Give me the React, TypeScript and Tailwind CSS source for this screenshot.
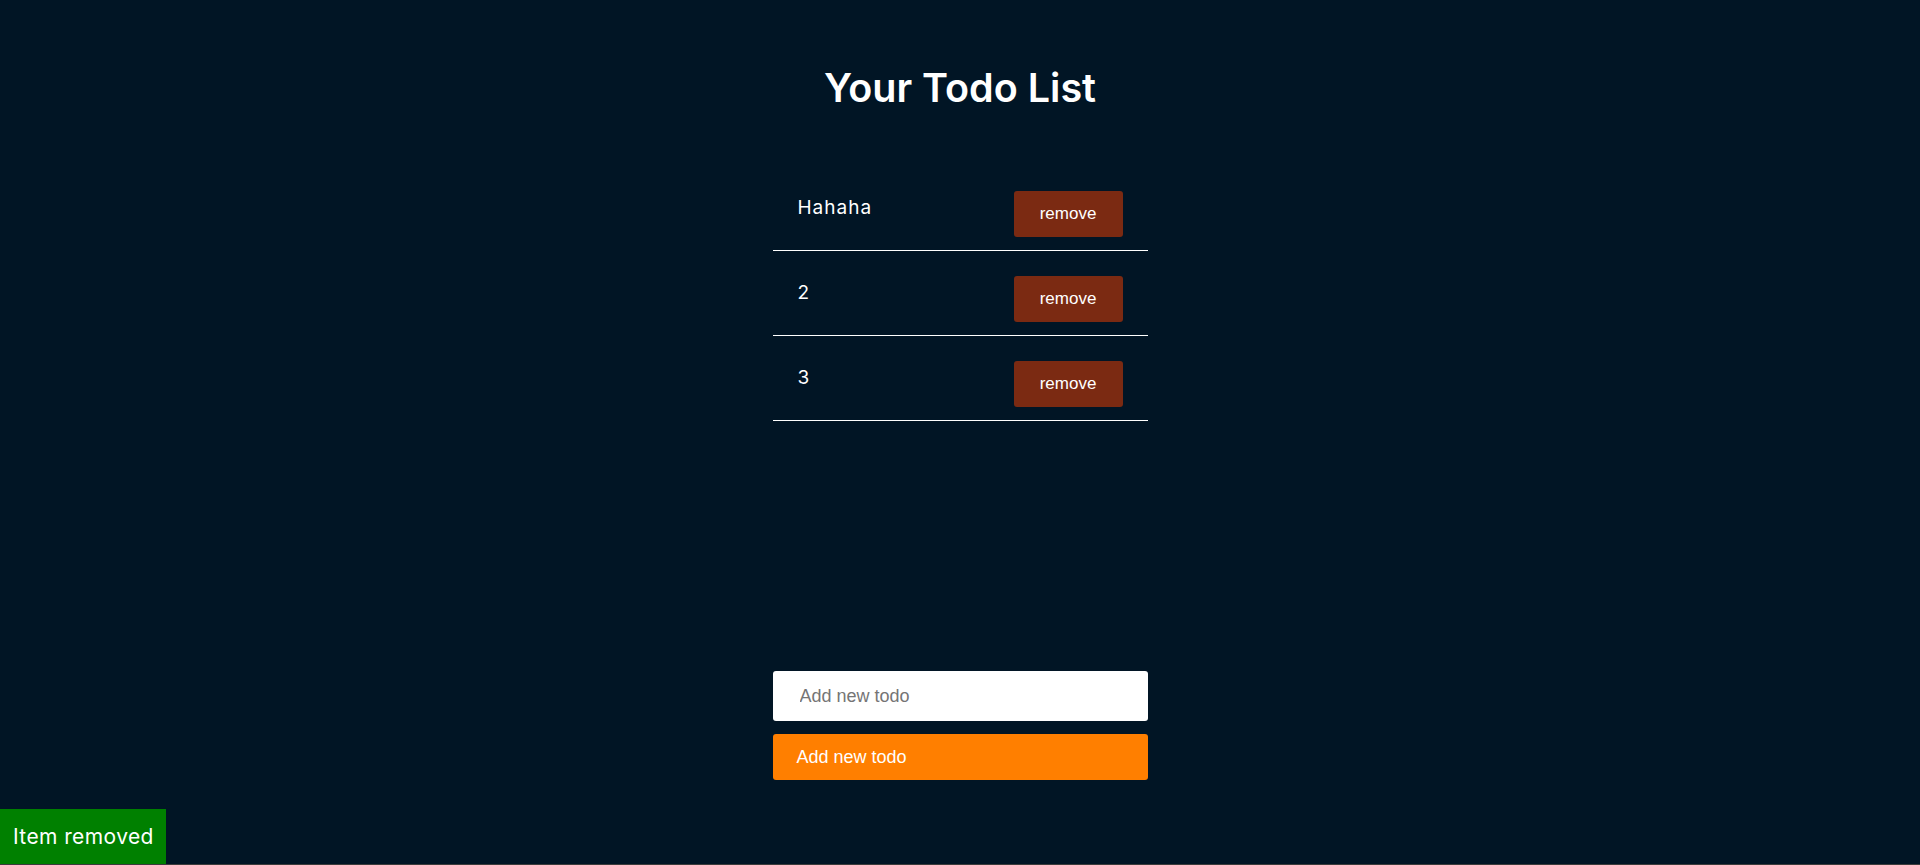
const todos = ['Hahaha', '2', '3'];

const TodoRow: React.FC<{ text: string }> = ({ text }) => {
    return (
        <li className="flex justify-between items-start h-[85px] pt-[25px] pl-[25px] pr-[25px] border-b border-white">
            <span className="text-[19px] leading-[27px] text-white font-['Inter',sans-serif] tracking-[1px] mt-[3px]">{text}</span>
            <button className="w-[109px] h-[46px] bg-[#7b2a12] rounded-[3px] text-white text-[17px] font-['Liberation_Sans',Arial,sans-serif]">
                remove
            </button>
        </li>
    );
};

export default function App() {
    return (
        <div className="relative h-[865px] bg-[#011525] border-b border-[#3c3c3c] overflow-hidden">
            <div className="w-[375px] mx-auto flex flex-col">
                <h1 className="mt-[63px] h-[50px] text-center text-white text-[39.5px] leading-[50px] font-semibold font-['Inter',sans-serif]">
                    Your Todo List
                </h1>
                <ul className="mt-[53px] flex flex-col">
                    {todos.map((t) => (
                        <TodoRow key={t} text={t} />
                    ))}
                </ul>
                <div className="mt-[250px] flex flex-col gap-[13px]">
                    <input
                        type="text"
                        placeholder="Add new todo"
                        className="h-[50px] w-full bg-white rounded-[3px] pl-[27px] text-[18px] text-black placeholder:text-[#757575] font-['Liberation_Sans',Arial,sans-serif] outline-none"
                    />
                    <button className="h-[46px] w-full bg-[#ff7f00] rounded-[3px] text-left pl-[24px] text-white text-[18px] font-['Liberation_Sans',Arial,sans-serif]">
                        Add new todo
                    </button>
                </div>
            </div>
            <div className="absolute left-0 bottom-0 w-[166px] h-[55px] bg-[#008000] flex items-center pl-[13px] text-white text-[21px] tracking-[0.4px] font-['Inter',sans-serif]">
                Item removed
            </div>
        </div>
    );
}
